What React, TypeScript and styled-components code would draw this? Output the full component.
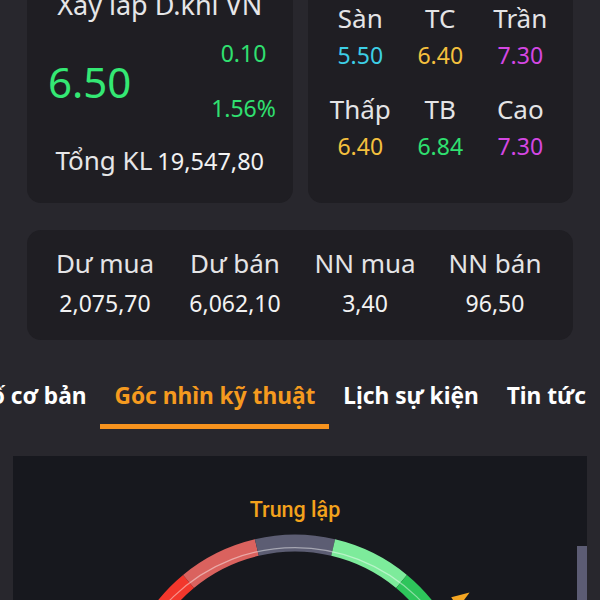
import React from 'react';
import styled, { createGlobalStyle } from 'styled-components';

const GlobalStyle = createGlobalStyle`
  html, body {
    margin: 0;
    padding: 0;
    background: #28272d;
  }
  body {
    font-family: 'Noto Sans', 'Liberation Sans', sans-serif;
  }
`;

const Page = styled.div`
  width: 600px;
  height: 600px;
  overflow: hidden;
  background: #28272d;
  color: #e6e6e8;
`;

// the screen is scrolled a little: the top of the first cards is out of view
const Scroller = styled.div`
  margin-top: -27px;
`;

const TopRow = styled.div`
  display: grid;
  grid-template-columns: 1fr 1fr;
  gap: 15px;
  padding: 0 27px;
`;

const Card = styled.div`
  background: #1f1e23;
  border-radius: 14px;
`;

const QuoteCard = styled(Card)`
  padding: 16px 14px 26px;
  display: flex;
  flex-direction: column;
  align-items: center;
`;

const Title = styled.div`
  font-size: 27px;
  line-height: 32px;
  white-space: nowrap;
`;

const PriceRow = styled.div`
  align-self: stretch;
  margin-top: 16px;
  padding-left: 7px;
  display: flex;
  justify-content: space-between;
  align-items: center;
`;

const Price = styled.div`
  font-size: 42px;
  line-height: 50px;
  color: #34e874;
  margin-top: 3px;
`;

const ChangeCol = styled.div`
  display: flex;
  flex-direction: column;
  align-items: center;
  gap: 23px;
  width: 70px;
`;

const Change = styled.div`
  font-size: 23px;
  line-height: 32px;
  color: #30e070;
`;

const Total = styled.div`
  margin-top: 20px;
  font-size: 26px;
  line-height: 32px;
  white-space: nowrap;

  span {
    margin-left: 5px;
    font-size: 23.5px;
    color: #f2f2f2;
  }
`;

const RangeCard = styled(Card)`
  padding: 29px 0 40px;
  display: grid;
  grid-template-columns: repeat(3, 80px);
  justify-content: center;
  row-gap: 21px;
`;

const Cell = styled.div`
  display: flex;
  flex-direction: column;
  align-items: center;
`;

const Label = styled.div`
  font-size: 26px;
  line-height: 32px;
  color: #e4e4e6;
  white-space: nowrap;
`;

const Value = styled.div<{ $color?: string; $gap: number }>`
  margin-top: ${p => p.$gap}px;
  font-size: 23px;
  line-height: 32px;
  color: ${p => p.$color || '#f2f2f2'};
  white-space: nowrap;
`;

const FlowCard = styled(Card)`
  margin: 27px 27px 0;
  padding: 17px 0 21px;
  display: grid;
  grid-template-columns: repeat(4, 130px);
  justify-content: center;
`;

const Tabs = styled.div`
  margin-top: 40px;
  display: flex;
  justify-content: flex-end;
  overflow: hidden;
`;

const Tab = styled.div<{ $active?: boolean }>`
  flex-shrink: 0;
  padding: 0 14px 12px;
  font-size: 22.7px;
  line-height: 32px;
  font-weight: 700;
  white-space: nowrap;
  color: ${p => (p.$active ? '#f59a1f' : '#ffffff')};
  border-bottom: 5px solid ${p => (p.$active ? '#f7931e' : 'transparent')};
`;

const ChartPanel = styled.div`
  margin: 27px 13px 0;
  height: 300px;
  background: #17181e;
  display: flex;
`;

const ChartBody = styled.div`
  flex: 1;
  display: flex;
  flex-direction: column;
  align-items: center;
  padding-top: 41px;
`;

const Verdict = styled.div`
  font-family: Roboto, 'Noto Sans', sans-serif;
  font-weight: 500;
  font-size: 21.5px;
  line-height: 26px;
  color: #f3a21c;
`;

const ScrollTrack = styled.div`
  width: 10px;
  padding-top: 90px;
`;

const ScrollThumb = styled.div`
  height: 160px;
  background: #5c5c74;
`;

const rangeData = [
  { label: 'Sàn', value: '5.50', color: '#3dcfe6' },
  { label: 'TC', value: '6.40', color: '#f4c03e' },
  { label: 'Trần', value: '7.30', color: '#d447e2' },
  { label: 'Thấp', value: '6.40', color: '#f4c03e' },
  { label: 'TB', value: '6.84', color: '#2fe070' },
  { label: 'Cao', value: '7.30', color: '#d447e2' },
];

const flowData = [
  { label: 'Dư mua', value: '2,075,70' },
  { label: 'Dư bán', value: '6,062,10' },
  { label: 'NN mua', value: '3,40' },
  { label: 'NN bán', value: '96,50' },
];

const tabs = ['Tổng quan', 'Chỉ số cơ bản', 'Góc nhìn kỹ thuật', 'Lịch sự kiện', 'Tin tức'];

const CX = 282;
const CY = 209;
const R_OUT = 196;
const R_IN = 177;

const xy = (r: number, deg: number) => {
  const a = (deg * Math.PI) / 180;
  return [CX + r * Math.sin(a), CY - r * Math.cos(a)];
};

const pt = (r: number, deg: number) => {
  const [x, y] = xy(r, deg);
  return `${x.toFixed(2)} ${y.toFixed(2)}`;
};

const segment = (a0: number, a1: number) =>
  `M ${pt(R_OUT, a0)} A ${R_OUT} ${R_OUT} 0 0 1 ${pt(R_OUT, a1)} L ${pt(R_IN, a1)} A ${R_IN} ${R_IN} 0 0 0 ${pt(R_IN, a0)} Z`;

const gaugeSegments = [
  { from: -92.4, to: -66, color: '#c42a22' },
  { from: -66, to: -39.6, color: '#f2372c' },
  { from: -39.6, to: -13.2, color: '#da625e' },
  { from: -13.2, to: 13.2, color: '#5c5d73' },
  { from: 13.2, to: 39.6, color: '#7deb9b' },
  { from: 39.6, to: 66, color: '#2ec55b' },
  { from: 66, to: 92.4, color: '#1f9e48' },
];

const Gauge: React.FC<{ angle: number }> = ({ angle }) => {
  // needle from the centre, only its arrow tip shows above the fold
  const [tx, ty] = xy(235, angle);
  const [bx, by] = xy(215, angle);
  const a = (angle * Math.PI) / 180;
  const nx = Math.cos(a) * 7;
  const ny = Math.sin(a) * 7;
  return (
    <svg width="564" height="260" viewBox="0 0 564 260">
      {gaugeSegments.map(s => (
        <path key={s.from} d={segment(s.from, s.to)} fill={s.color} />
      ))}
      <path
        d={`M ${pt(R_OUT - 0.7, -92)} A ${R_OUT - 0.7} ${R_OUT - 0.7} 0 0 1 ${pt(R_OUT - 0.7, 92)}`}
        fill="none"
        stroke="rgba(255,255,255,0.45)"
        strokeWidth="1.4"
      />
      <line x1={CX} y1={CY} x2={bx} y2={by} stroke="#f5a623" strokeWidth="3" />
      <polygon
        points={`${tx},${ty} ${bx + nx},${by + ny} ${bx - nx},${by - ny}`}
        fill="#f5a623"
      />
    </svg>
  );
};

const App: React.FC = () => {
  return (
    <Page>
      <GlobalStyle />
      <Scroller>
        <TopRow>
          <QuoteCard>
            <Title>Xây lắp D.khí VN</Title>
            <PriceRow>
              <Price>6.50</Price>
              <ChangeCol>
                <Change>0.10</Change>
                <Change>1.56%</Change>
              </ChangeCol>
            </PriceRow>
            <Total>
              Tổng KL<span>19,547,80</span>
            </Total>
          </QuoteCard>
          <RangeCard>
            {rangeData.map(item => (
              <Cell key={item.label}>
                <Label>{item.label}</Label>
                <Value $gap={5} $color={item.color}>
                  {item.value}
                </Value>
              </Cell>
            ))}
          </RangeCard>
        </TopRow>

        <FlowCard>
          {flowData.map(item => (
            <Cell key={item.label}>
              <Label>{item.label}</Label>
              <Value $gap={8}>{item.value}</Value>
            </Cell>
          ))}
        </FlowCard>

        <Tabs>
          {tabs.map(t => (
            <Tab key={t} $active={t === 'Góc nhìn kỹ thuật'}>
              {t}
            </Tab>
          ))}
        </Tabs>

        <ChartPanel>
          <ChartBody>
            <Verdict>Trung lập</Verdict>
            <Gauge angle={56} />
          </ChartBody>
          <ScrollTrack>
            <ScrollThumb />
          </ScrollTrack>
        </ChartPanel>
      </Scroller>
    </Page>
  );
};

export default App;
